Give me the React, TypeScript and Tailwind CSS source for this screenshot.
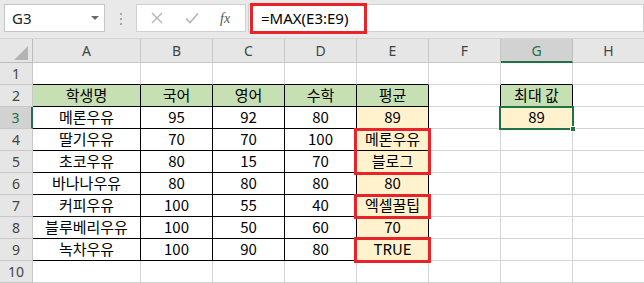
import React from "react";

const cols = ["A", "B", "C", "D", "E", "F", "G", "H"];

const rows: string[][] = [
  [],
  ["학생명", "국어", "영어", "수학", "평균", "", "최대 값"],
  ["메론우유", "95", "92", "80", "89", "", "89"],
  ["딸기우유", "70", "70", "100", "메론우유"],
  ["초코우유", "80", "15", "70", "블로그"],
  ["바나나우유", "80", "80", "80", "80"],
  ["커피우유", "100", "55", "40", "엑셀꿀팁"],
  ["블루베리우유", "100", "50", "60", "70"],
  ["녹차우유", "100", "90", "80", "TRUE"],
  [],
];

const cellFont = { fontFamily: "'Noto Sans CJK KR', 'Noto Sans', sans-serif" };

function cellClass(r: number, c: number) {
  const inTable = r >= 2 && r <= 9 && c <= 4;
  const rightBlack = inTable || (r === 2 && (c === 5 || c === 6));
  const bottomBlack = (r >= 1 && r <= 9 && c <= 4) || (c === 6 && (r === 1 || r === 2));
  let bg = "bg-white";
  if ((r === 2 && c <= 4) || (r === 2 && c === 6)) bg = "bg-[#c6e0b4]";
  else if ((c === 4 && r >= 3 && r <= 9) || (r === 3 && c === 6)) bg = "bg-[#fff2cc]";
  return [
    "flex items-center justify-center overflow-hidden whitespace-nowrap text-[15px] text-black border-r border-b",
    rightBlack ? "border-r-black" : "border-r-[#d4d4d4]",
    bottomBlack ? "border-b-black" : "border-b-[#d4d4d4]",
    bg,
  ].join(" ");
}

function FormulaBar() {
  return (
    <div className="flex h-[39px] items-start bg-[#e9e9e9] border-b border-[#d4d4d4] pt-[4px]" style={{ fontFamily: "'Noto Sans', sans-serif" }}>
      <div className="ml-[4px] flex h-[28px] w-[101px] items-center justify-between border border-[#c6c6c6] bg-white pl-[7px] pr-[5px]">
        <span className="text-[15px] text-[#222]">G3</span>
        <span className="h-0 w-0 border-x-[4px] border-t-[4px] border-x-transparent border-t-[#6a6a6a]" />
      </div>
      <div className="ml-[15px] mr-[14px] mt-[9px] flex flex-col gap-[3px]">
        <span className="h-[2px] w-[2px] bg-[#a8a8a8]" />
        <span className="h-[2px] w-[2px] bg-[#a8a8a8]" />
        <span className="h-[2px] w-[2px] bg-[#a8a8a8]" />
      </div>
      <div className="flex h-[28px] w-[110px] items-center border border-[#d0d0d0] bg-white">
        <svg width="12" height="12" viewBox="0 0 12 12" className="ml-[14px]">
          <path d="M1 1L11 11M11 1L1 11" stroke="#b4b4b4" strokeWidth="1.4" fill="none" />
        </svg>
        <svg width="14" height="12" viewBox="0 0 14 12" className="ml-[22px]">
          <path d="M1 6.5L5 10.5L13 1.5" stroke="#b4b4b4" strokeWidth="1.6" fill="none" />
        </svg>
        <span className="ml-[21px] text-[14px] italic text-[#555]" style={{ fontFamily: "'Liberation Serif', serif" }}>
          fx
        </span>
      </div>
      <div className="ml-[2px] flex h-[28px] flex-1 items-center border border-[#d0d0d0] bg-white pl-[12px]">
        <span className="text-[15px] text-black">=MAX(E3:E9)</span>
      </div>
    </div>
  );
}

export default function App() {
  return (
    <div className="relative h-[283px] w-[644px] overflow-hidden bg-white">
      <FormulaBar />

      <div
        className="grid grid-cols-[33px_108px_72px_72px_72px_72px_72px_72px_72px] grid-rows-[24px_repeat(10,22px)]"
        style={{ fontFamily: "'Noto Sans', sans-serif" }}
      >
        {/* corner */}
        <div className="relative border-r border-b border-[#bdbdbd] bg-[#e6e6e6]">
          <svg className="absolute bottom-[2px] right-[4px]" width="14" height="14" viewBox="0 0 14 14">
            <path d="M14 0V14H0Z" fill="#b4b4b4" />
          </svg>
        </div>
        {cols.map((c) =>
          c === "G" ? (
            <div key={c} className="flex items-center justify-center border-r border-[#bdbdbd] border-b-2 border-b-[#217346] bg-[#d2d2d2] text-[14px] text-[#217346]">
              {c}
            </div>
          ) : (
            <div key={c} className="flex items-center justify-center border-r border-b border-[#c8c8c8] bg-[#e6e6e6] text-[14px] text-[#444]">
              {c}
            </div>
          )
        )}

        {rows.map((row, i) => {
          const r = i + 1;
          return (
            <React.Fragment key={r}>
              {r === 3 ? (
                <div className="flex items-center justify-center border-b border-[#c8c8c8] border-r-2 border-r-[#217346] bg-[#d2d2d2] text-[14px] text-[#217346]">
                  {r}
                </div>
              ) : (
                <div className="flex items-center justify-center border-r border-b border-[#c8c8c8] bg-[#e6e6e6] text-[14px] text-[#444]">
                  {r}
                </div>
              )}
              {cols.map((_, c) => (
                <div key={c} className={cellClass(r, c)} style={cellFont}>
                  {row[c] ?? ""}
                </div>
              ))}
            </React.Fragment>
          );
        })}
      </div>

      {/* active cell G3 */}
      <div className="absolute left-[499px] top-[106px] h-[24px] w-[75px] border-2 border-[#217346]" />
      <div className="absolute left-[570px] top-[126px] h-[6px] w-[6px] border border-white bg-[#217346]" />

      {/* red highlight boxes */}
      <div className="absolute left-[250px] top-[3px] h-[31px] w-[117px] border-[3px] border-[#e8232a]" />
      <div className="absolute left-[354px] top-[128px] h-[47px] w-[77px] border-[3px] border-[#e8232a]" />
      <div className="absolute left-[354px] top-[194px] h-[25px] w-[77px] border-[3px] border-[#e8232a]" />
      <div className="absolute left-[354px] top-[237px] h-[26px] w-[77px] border-[3px] border-[#e8232a]" />
    </div>
  );
}
